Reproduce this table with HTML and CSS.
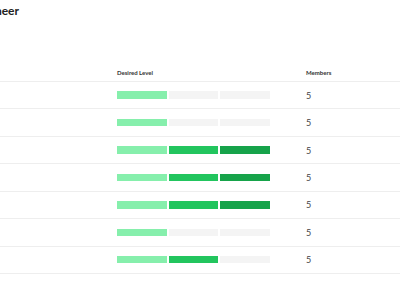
FILE: index.html
```html
<!DOCTYPE html>
<html lang="en">
<head>
    <meta charset="UTF-8">
    <meta name="viewport" content="width=device-width, initial-scale=1.0">
    <title>Engineer – Skills</title>
    <link rel="stylesheet" href="styles.css">
</head>
<body>
    <div class="page">
        <h1 class="role-title">Engineer</h1>

        <div class="skills-table">
            <div class="table-row table-head">
                <div class="cell skill-name"></div>
                <div class="cell">Desired Level</div>
                <div class="cell">Members</div>
            </div>

            <div class="table-row">
                <div class="cell skill-name"></div>
                <div class="cell">
                    <div class="level-bar">
                        <span class="seg seg-1"></span>
                        <span class="seg"></span>
                        <span class="seg"></span>
                    </div>
                </div>
                <div class="cell members">5</div>
            </div>

            <div class="table-row">
                <div class="cell skill-name"></div>
                <div class="cell">
                    <div class="level-bar">
                        <span class="seg seg-1"></span>
                        <span class="seg"></span>
                        <span class="seg"></span>
                    </div>
                </div>
                <div class="cell members">5</div>
            </div>

            <div class="table-row">
                <div class="cell skill-name"></div>
                <div class="cell">
                    <div class="level-bar">
                        <span class="seg seg-1"></span>
                        <span class="seg seg-2"></span>
                        <span class="seg seg-3"></span>
                    </div>
                </div>
                <div class="cell members">5</div>
            </div>

            <div class="table-row">
                <div class="cell skill-name"></div>
                <div class="cell">
                    <div class="level-bar">
                        <span class="seg seg-1"></span>
                        <span class="seg seg-2"></span>
                        <span class="seg seg-3"></span>
                    </div>
                </div>
                <div class="cell members">5</div>
            </div>

            <div class="table-row">
                <div class="cell skill-name"></div>
                <div class="cell">
                    <div class="level-bar">
                        <span class="seg seg-1"></span>
                        <span class="seg seg-2"></span>
                        <span class="seg seg-3"></span>
                    </div>
                </div>
                <div class="cell members">5</div>
            </div>

            <div class="table-row">
                <div class="cell skill-name"></div>
                <div class="cell">
                    <div class="level-bar">
                        <span class="seg seg-1"></span>
                        <span class="seg"></span>
                        <span class="seg"></span>
                    </div>
                </div>
                <div class="cell members">5</div>
            </div>

            <div class="table-row">
                <div class="cell skill-name"></div>
                <div class="cell">
                    <div class="level-bar">
                        <span class="seg seg-1"></span>
                        <span class="seg seg-2"></span>
                        <span class="seg"></span>
                    </div>
                </div>
                <div class="cell members">5</div>
            </div>
        </div>
    </div>
</body>
</html>
```

FILE: styles.css
```css
body {
    font-family: Lato, "Noto Sans", sans-serif;
    margin: 0;
    background-color: #fff;
    color: #333;
    overflow: hidden;
}

.page {
    margin-left: -96px;
    width: 496px;
}

.role-title {
    margin: 0;
    padding-top: 3px;
    padding-left: 68px;
    font-size: 12px;
    line-height: 15px;
    font-weight: 700;
    color: #222;
}

.skills-table {
    margin-top: 45px;
}

.table-row {
    display: grid;
    grid-template-columns: 213px 189px 1fr;
    align-items: center;
    box-sizing: border-box;
    height: 27.43px;
    border-bottom: 1px solid #eeeeee;
}

.table-head {
    height: 19px;
    font-size: 6px;
    font-weight: 700;
    color: #333;
}

.members {
    font-size: 9px;
    color: #444;
}

.level-bar {
    display: flex;
    gap: 2px;
}

.seg {
    display: block;
    width: 49.5px;
    height: 7.5px;
    background-color: #f4f4f4;
}

.seg-1 {
    background-color: #86efac;
}

.seg-2 {
    background-color: #22c55e;
}

.seg-3 {
    background-color: #16a34a;
}
```
